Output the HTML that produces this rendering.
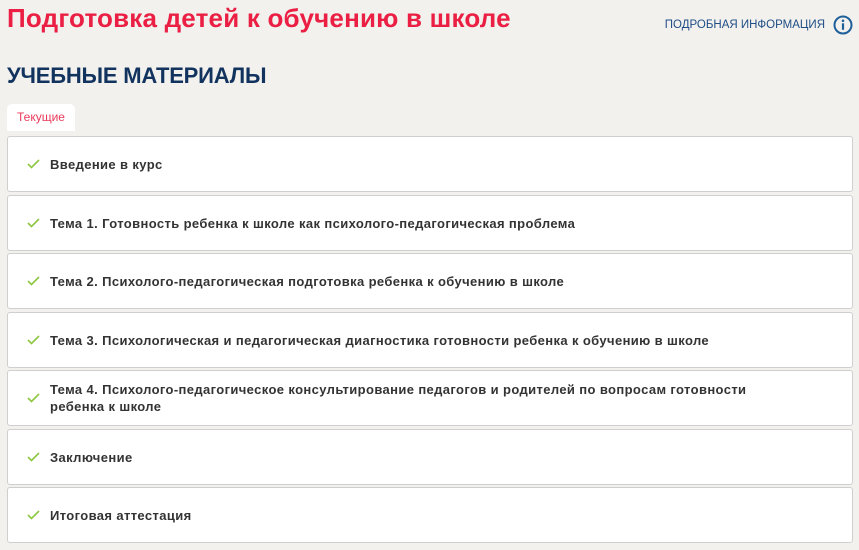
<!DOCTYPE html>
<html><head><meta charset="utf-8"><style>
body{margin:0;background:#f2f1ee;font-family:"Liberation Sans","DejaVu Sans",sans-serif;width:859px;height:550px;overflow:hidden;position:relative}
.t{position:absolute;left:7px;top:3px;font-size:26px;font-weight:bold;color:#ea1f43;letter-spacing:0.2px}
.info{position:absolute;right:6px;top:15px;font-size:11.5px;color:#1f4d85;display:flex;align-items:center;gap:8px}
.h{position:absolute;left:7px;top:63px;font-size:22px;font-weight:bold;color:#13335f;letter-spacing:-0.2px}
.tab{position:absolute;left:7px;top:104px;width:68px;height:27px;background:#fff;border-radius:5px 5px 0 0;font-size:12px;color:#ea3a5a;text-align:center;line-height:27px}
.row{position:absolute;left:7px;width:844px;background:#fff;border:1px solid #cfcfcf;border-radius:3px;display:flex;align-items:center;font-size:13px;font-weight:bold;color:#333;line-height:17px;letter-spacing:0.38px}
.row svg{margin:0 10px 0 19px;flex:none}
</style></head><body>
<div class="t">Подготовка детей к обучению в школе</div>
<div class="info">ПОДРОБНАЯ ИНФОРМАЦИЯ <svg width="20" height="20" viewBox="0 0 20 20"><circle cx="10" cy="10" r="8.5" fill="none" stroke="#1f5f9a" stroke-width="2"/><circle cx="10" cy="5.8" r="1.3" fill="#1f5f9a"/><rect x="8.9" y="8.3" width="2.2" height="6.5" fill="#1f5f9a"/></svg></div>
<div class="h">УЧЕБНЫЕ МАТЕРИАЛЫ</div>
<div class="tab">Текущие</div>
<div class="row" style="top:136px;height:54px"><svg width="13" height="10" viewBox="0 0 13 10"><path d="M1 5l3.5 3.5L12 1" fill="none" stroke="#8dc63f" stroke-width="1.6"/></svg>Введение в курс</div>
<div class="row" style="top:195px;height:54px"><svg width="13" height="10" viewBox="0 0 13 10"><path d="M1 5l3.5 3.5L12 1" fill="none" stroke="#8dc63f" stroke-width="1.6"/></svg>Тема 1. Готовность ребенка к школе как психолого-педагогическая проблема</div>
<div class="row" style="top:253px;height:54px"><svg width="13" height="10" viewBox="0 0 13 10"><path d="M1 5l3.5 3.5L12 1" fill="none" stroke="#8dc63f" stroke-width="1.6"/></svg>Тема 2. Психолого-педагогическая подготовка ребенка к обучению в школе</div>
<div class="row" style="top:312px;height:54px"><svg width="13" height="10" viewBox="0 0 13 10"><path d="M1 5l3.5 3.5L12 1" fill="none" stroke="#8dc63f" stroke-width="1.6"/></svg>Тема 3. Психологическая и педагогическая диагностика готовности ребенка к обучению в школе</div>
<div class="row" style="top:370px;height:54px"><svg width="13" height="10" viewBox="0 0 13 10"><path d="M1 5l3.5 3.5L12 1" fill="none" stroke="#8dc63f" stroke-width="1.6"/></svg><span style="width:720px">Тема 4. Психолого-педагогическое консультирование педагогов и родителей по вопросам готовности<br>ребенка к школе</span></div>
<div class="row" style="top:429px;height:54px"><svg width="13" height="10" viewBox="0 0 13 10"><path d="M1 5l3.5 3.5L12 1" fill="none" stroke="#8dc63f" stroke-width="1.6"/></svg>Заключение</div>
<div class="row" style="top:487px;height:54px"><svg width="13" height="10" viewBox="0 0 13 10"><path d="M1 5l3.5 3.5L12 1" fill="none" stroke="#8dc63f" stroke-width="1.6"/></svg>Итоговая аттестация</div>
</body></html>
